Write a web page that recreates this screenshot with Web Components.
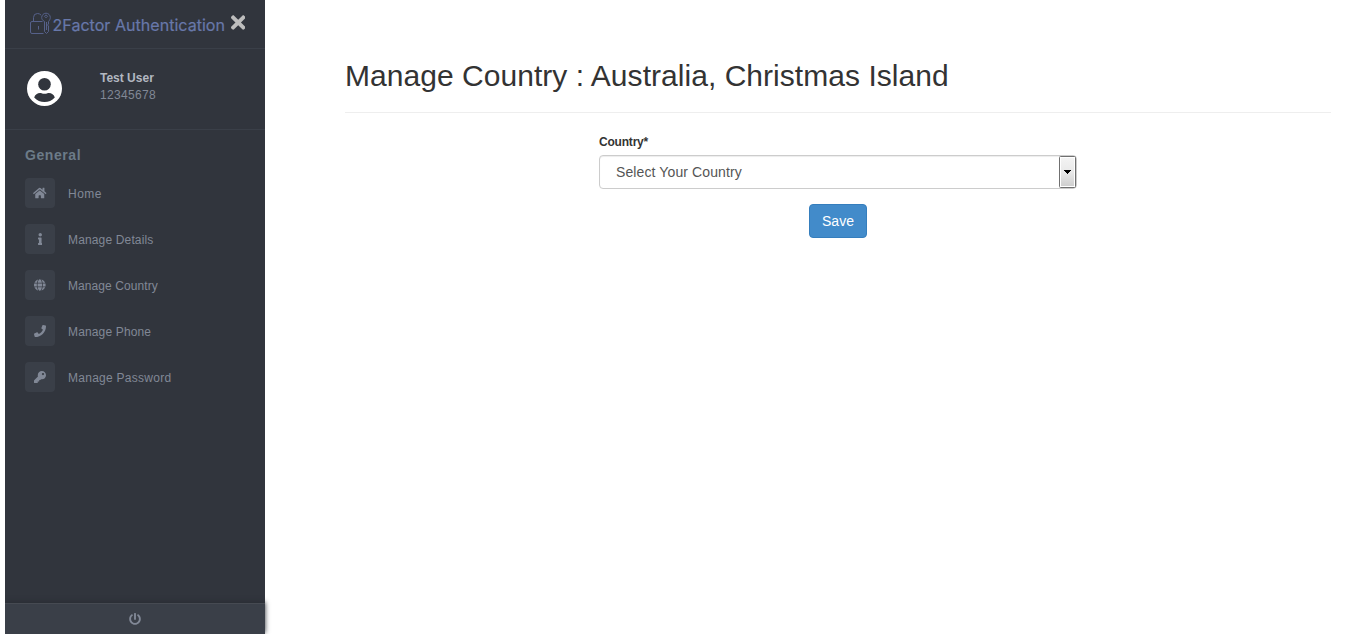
<!DOCTYPE html>
<html lang="en">
<head>
<meta charset="utf-8">
<title>Manage Country</title>
<style>
body { margin: 0; background: #fff; font: 14px/20px "Liberation Sans", Arial, sans-serif; color: #333; }
</style>
</head>
<body>
<app-shell>
  <side-bar slot="side">
    <brand-bar slot="top"></brand-bar>
    <user-card slot="top" name="Test User" number="12345678"></user-card>
    <nav-item icon="home" spacing=".5px">Home</nav-item>
    <nav-item icon="info" spacing=".15px">Manage Details</nav-item>
    <nav-item icon="globe" spacing=".08px">Manage Country</nav-item>
    <nav-item icon="phone" spacing=".15px">Manage Phone</nav-item>
    <nav-item icon="key" spacing=".27px">Manage Password</nav-item>
  </side-bar>
  <page-title>Manage Country : Australia, Christmas Island</page-title>
  <country-form></country-form>
</app-shell>
<script>
const ICONS = {
  home: [576, "M280.37 148.26L96 300.11V464a16 16 0 0 0 16 16l112.06-.29a16 16 0 0 0 15.92-16V368a16 16 0 0 1 16-16h64a16 16 0 0 1 16 16v95.64a16 16 0 0 0 16 16.05L464 480a16 16 0 0 0 16-16V300L295.67 148.26a12.19 12.19 0 0 0-15.3 0zM571.6 251.47L488 182.56V44.05a12 12 0 0 0-12-12h-56a12 12 0 0 0-12 12v72.61L318.47 43a48 48 0 0 0-61 0L4.34 251.47a12 12 0 0 0-1.6 16.9l25.5 31A12 12 0 0 0 45.15 301l235.22-193.74a12.19 12.19 0 0 1 15.3 0L530.9 301a12 12 0 0 0 16.9-1.6l25.5-31a12 12 0 0 0-1.7-16.93z"],
  info: [192, "M20 424.229h20V279.771H20c-11.046 0-20-8.954-20-20V212c0-11.046 8.954-20 20-20h112c11.046 0 20 8.954 20 20v212.229h20c11.046 0 20 8.954 20 20V492c0 11.046-8.954 20-20 20H20c-11.046 0-20-8.954-20-20v-47.771c0-11.046 8.954-20 20-20zM96 0C56.235 0 24 32.235 24 72s32.235 72 72 72 72-32.235 72-72S135.764 0 96 0z"],
  globe: [496, "M336.5 160C322 70.7 287.8 8 248 8s-74 62.7-88.5 152h177zM152 256c0 22.2 1.2 43.5 3.3 64h185.3c2.1-20.5 3.3-41.8 3.3-64s-1.2-43.5-3.3-64H155.3c-2.1 20.5-3.3 41.8-3.3 64zm324.7-96c-28.6-67.9-86.5-120.4-158-141.6 24.4 33.8 41.2 84.7 50 141.6h108zM177.2 18.4C105.8 39.6 47.8 92.1 19.3 160h108c8.7-56.9 25.5-107.8 49.9-141.6zM487.4 192H372.7c2.1 21 3.3 42.5 3.3 64s-1.2 43-3.3 64h114.6c5.5-20.5 8.6-41.8 8.6-64s-3.1-43.5-8.5-64zM120 256c0-21.5 1.2-43 3.3-64H8.6C3.2 212.5 0 233.8 0 256s3.2 43.5 8.6 64h114.6c-2-21-3.2-42.5-3.2-64zm39.5 96c14.5 89.3 48.7 152 88.5 152s74-62.7 88.5-152h-177zm159.3 141.6c71.4-21.2 129.4-73.7 158-141.6h-108c-8.8 56.9-25.6 107.8-50 141.6zM19.3 352c28.6 67.9 86.5 120.4 158 141.6-24.4-33.8-41.2-84.7-50-141.6h-108z"],
  phone: [512, "M493.4 24.6l-104-24c-11.3-2.6-22.9 3.3-27.5 13.9l-48 112c-4.2 9.8-1.4 21.3 6.9 28l60.6 49.6c-36 76.7-98.9 140.5-177.2 177.2l-49.6-60.6c-6.8-8.3-18.2-11.1-28-6.9l-112 48C3.9 366.5-2 378.1.6 389.4l24 104C27.1 504.2 36.7 512 48 512c256.1 0 464-207.5 464-464 0-11.2-7.7-20.9-18.6-23.4z"],
  key: [512, "M512 176.001C512 273.203 433.202 352 336 352c-11.22 0-22.19-1.062-32.827-3.069l-24.012 27.014A23.999 23.999 0 0 1 261.223 384H224v40c0 13.255-10.745 24-24 24h-40v40c0 13.255-10.745 24-24 24H24c-13.255 0-24-10.745-24-24v-78.059c0-6.365 2.529-12.47 7.029-16.971l161.802-161.802C163.108 213.814 160 195.271 160 176 160 78.798 238.797.001 335.999 0 433.488-.001 512 78.511 512 176.001zM336 128c0 26.51 21.49 48 48 48s48-21.49 48-48-21.49-48-48-48-48 21.49-48 48z"],
  power: [512, "M400 54.1c63 45 104 118.6 104 201.9 0 136.8-110.8 247.7-247.5 248C120 504.3 8.2 393 8 256.4 7.9 173.1 48.9 99.3 111.8 54.2c11.7-8.3 28-4.8 35 7.7L162.6 90c5.9 10.5 3.1 23.8-6.6 31-41.5 30.8-68 79.6-68 134.9-.1 92.3 74.5 168.1 168 168.1 91.6 0 168.6-74.2 168-169.1-.3-51.8-24.7-101.8-68.1-134-9.7-7.2-12.4-20.5-6.5-30.9l15.8-28.1c7-12.4 23.2-16.1 34.8-7.8zM296 264V24c0-13.3-10.7-24-24-24h-32c-13.3 0-24 10.7-24 24v240c0 13.3 10.7 24 24 24h32c13.3 0 24-10.7 24-24z"],
  times: [352, "M242.72 256l100.07-100.07c12.28-12.28 12.28-32.19 0-44.48l-22.24-22.24c-12.28-12.28-32.19-12.28-44.48 0L176 189.28 75.93 89.21c-12.28-12.28-32.19-12.28-44.48 0L9.21 111.45c-12.28 12.28-12.28 32.19 0 44.48L109.28 256 9.21 356.07c-12.28 12.28-12.28 32.19 0 44.48l22.24 22.24c12.28 12.28 32.2 12.28 44.48 0L176 322.72l100.07 100.07c12.28 12.28 32.2 12.28 44.48 0l22.24-22.24c12.28-12.28 12.28-32.19 0-44.48L242.72 256z"]
};
const icon = (name, size) => {
  const [w, d] = ICONS[name];
  return `<svg width="${w / 512 * size}" height="${size}" viewBox="0 0 ${w} 512" fill="currentColor"><path d="${d}"/></svg>`;
};
const define = (tag, render) => customElements.define(tag, class extends HTMLElement {
  constructor() { super(); this.attachShadow({ mode: "open" }); }
  connectedCallback() { this.shadowRoot.innerHTML = render(this); }
});

define("app-shell", () => `<style>
  :host { display: grid; grid-template-columns: 260px 1fr; height: 634px; padding-left: 5px; box-sizing: border-box; overflow: hidden; }
  main { padding: 56px 27px 0 80px; }
</style><slot name="side"></slot><main><slot></slot></main>`);

define("side-bar", () => `<style>
  :host { display: flex; flex-direction: column; background: #31353d; height: 634px; clip-path: inset(0 -10px 0 0); }
  nav { flex: 1; padding: 15px 20px 0; }
  h2 { margin: 0 0 13px; font-size: 14px; line-height: 20px; letter-spacing: .58px; color: #6c7b88; }
  .items { display: flex; flex-direction: column; gap: 16px; }
  footer { height: 30px; display: flex; align-items: center; justify-content: center; background: #3a3f48;
    border-top: 1px solid #464a52; box-shadow: 0 -1px 5px #282c33; color: #818896; }
</style><slot name="top"></slot>
<nav><h2>General</h2><div class="items"><slot></slot></div></nav>
<footer>${icon("power", 12)}</footer>`);

define("brand-bar", () => `<style>
  :host { display: flex; height: 48px; border-bottom: 1px solid #3a3f48; padding: 0 20px 0 25px; }
  .logo { flex: none; width: 201px; height: 48px; }
  .close { color: #bdbdbd; display: flex; padding-top: 12px; }
  .close svg { display: block; }
  text { font-family: "Inter", sans-serif; font-size: 16.5px; fill: #6878aa; stroke: #6878aa; stroke-width: .2px; }
</style>
<svg class="logo" viewBox="30 0 201 48" fill="none" stroke="#56618a" stroke-width="1">
  <path d="M42.500 21.500H32Q30.500 21.500 30.500 23V32Q30.500 33.500 32 33.500H43.500"/>
  <path d="M33.500 21.500V17.500Q33.500 13.500 37.500 13.500Q39.500 13.500 41 15"/>
  <path d="M38.500 26V29.500"/>
  <path d="M44.500 21.500C42.500 20.500 41.700 19 41.700 17.500A4.300 4.300 0 0 1 50.300 17.500C50.300 19 49.500 20.500 48.500 21.500V24L47.500 25L48.500 26V31.500L46.500 33.500L44.500 31.500Z"/>
  <path d="M46 14.800L47.500 16.300L46 17.800L44.500 16.300ZM46.500 22V30"/>
  <text x="52.500" y="31" textLength="172.500" lengthAdjust="spacingAndGlyphs">2Factor Authentication</text>
</svg>
<div class="close">${icon("times", 21)}</div>`);

define("user-card", el => `<style>
  :host { display: flex; height: 80px; box-sizing: content-box; border-bottom: 1px solid #3a3f48; }
  .avatar { width: 35px; height: 35px; margin: 22px 38px 0 22px; }
  .text { padding-top: 21px; font-size: 12px; line-height: 17px; color: #818896; }
  b { display: block; color: #b3b8c1; }
  span { letter-spacing: .33px; }
</style>
<svg class="avatar" viewBox="0 0 35 35"><circle cx="17.500" cy="17.500" r="17.500" fill="#fff"/>
<circle cx="17.500" cy="13.200" r="6.300" fill="#31353d"/>
<path d="M7.200 26.500C8 23.500 10.500 22 13 22C14.500 22 15.500 22.800 17.500 22.800S20.500 22 22 22C24.500 22 27 23.500 27.800 26.500C25 29.500 21.500 31 17.500 31S10 29.500 7.200 26.500Z" fill="#31353d"/></svg>
<div class="text"><b>${el.getAttribute("name")}</b><span>${el.getAttribute("number")}</span></div>`);

define("nav-item", el => `<style>
  :host { display: flex; align-items: center; gap: 13px; height: 30px; font-size: 12px; letter-spacing: ${el.getAttribute("spacing")}; color: #818896; }
  i { display: flex; align-items: center; justify-content: center; width: 30px; height: 30px; border-radius: 4px; background: #3a3f48; }
  span { padding-top: 2px; }
</style><i>${icon(el.getAttribute("icon"), 12)}</i><span><slot></slot></span>`);

define("page-title", () => `<style>
  :host { display: block; border-bottom: 1px solid #eee; padding-bottom: 17px; margin-bottom: 20px; }
  h1 { margin: 0; font-size: 30px; line-height: 39px; font-weight: 400; color: #333; letter-spacing: .04px; }
</style><h1><slot></slot></h1>`);

define("country-form", () => `<style>
  :host { display: flex; flex-direction: column; align-items: center; }
  .field { width: 478px; }
  label { display: block; font-size: 12px; line-height: 17px; font-weight: 700; letter-spacing: -.2px; padding-top: 1px; margin-bottom: 4px; }
  .select { display: flex; justify-content: space-between; box-sizing: border-box; height: 34px; border: 1px solid #ccc; border-radius: 4px;
    box-shadow: inset 0 1px 1px rgba(0,0,0,.075); color: #555; line-height: 32px; padding-left: 16px; letter-spacing: .11px; }
  .arrow { width: 18px; height: 34px; margin: -1px -1px 0 0; }
  button { margin-top: 15px; width: 58px; height: 34px; padding: 0; border: 1px solid #357ebd; border-radius: 4px; background: #428bca; color: #fff;
    font: inherit; }
</style>
<div class="field"><label>Country*</label>
<div class="select"><span>Select Your Country</span>
<svg class="arrow" viewBox="0 0 18 34"><defs><linearGradient id="g" x2="0" y2="1"><stop stop-color="#f3f3f3"/><stop offset=".5" stop-color="#e9e9e9"/><stop offset="1" stop-color="#cfcfcf"/></linearGradient></defs>
<rect x=".5" y="1.500" width="16" height="31" rx="1" fill="#fff" stroke="#707070"/><rect x="2" y="3" width="13" height="28" fill="url(#g)"/><path d="M5 15H12V16H11V17H10V18H9V19H8V18H7V17H6V16H5Z" fill="#000"/></svg>
</div></div>
<button>Save</button>`);
</script>
</body>
</html>
